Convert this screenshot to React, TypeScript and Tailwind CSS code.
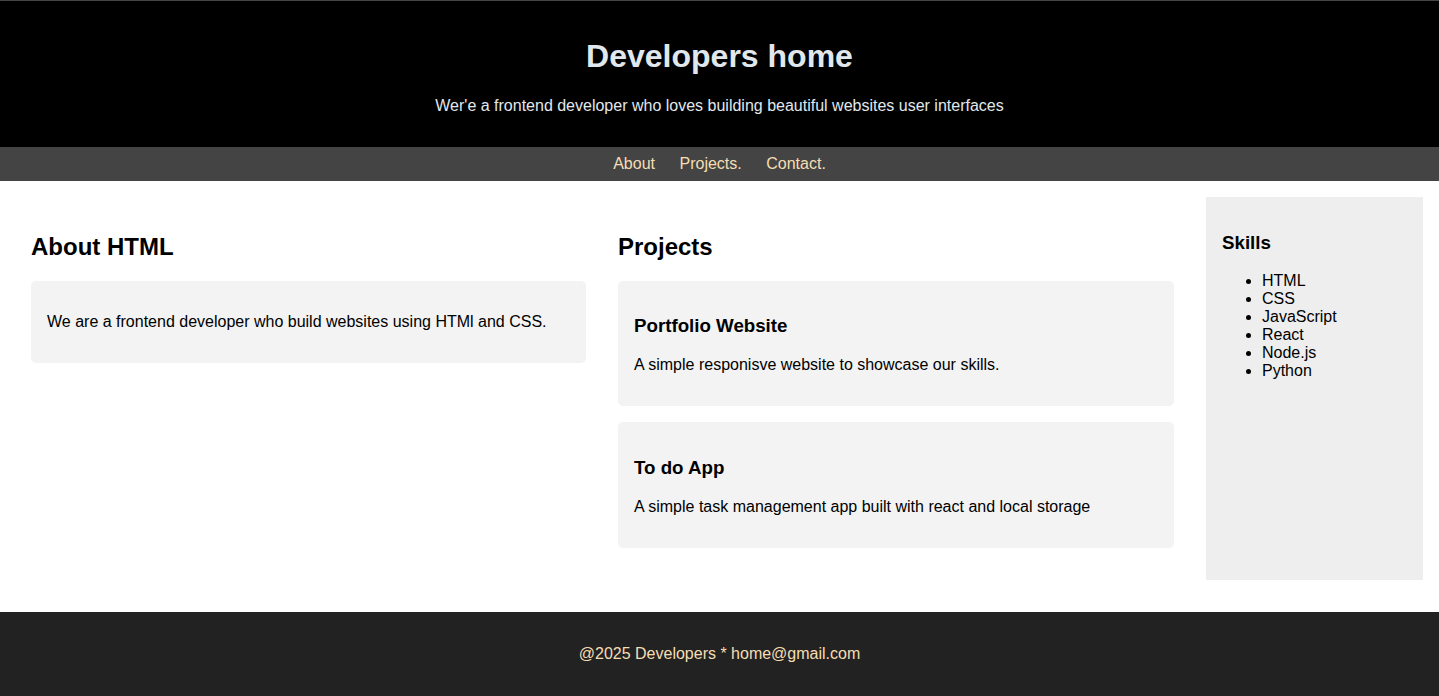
import React from "react";

const font = { fontFamily: '"Liberation Sans", Arial, sans-serif' };

function Card({ title, text }: { title?: string; text: string }) {
  return (
    <div className="mb-4 rounded-[5px] bg-[#f3f3f3] p-4">
      {title && (
        <h3 className="my-[18.72px] text-[18.72px] font-bold leading-[normal] text-black">{title}</h3>
      )}
      <p className="my-4 text-base leading-[normal] text-black">{text}</p>
    </div>
  );
}

export default function App() {
  return (
    <div className="min-h-[696px] bg-white" style={font}>
      <header className="border-t border-[#444444] bg-black px-4 py-4 text-center">
        <h1 className="my-[21.44px] text-[32px] font-bold leading-[normal] text-[#e1e8ed]">
          Developers home
        </h1>
        <p className="my-4 text-base leading-[normal] text-[#e1e8ed]">
          Wer&apos;e a frontend developer who loves building beautiful websites user interfaces
        </p>
      </header>
      <nav className="flex justify-center gap-[24.5px] bg-[#444444] py-2 text-base leading-[18px] text-[#f5deb3]">
        <a href="#about">About</a>
        <a href="#projects">Projects.</a>
        <a href="#contact">Contact.</a>
      </nav>
      <main className="flex pb-8 pl-[15px] pr-4 pt-4">
        <section className="w-[587px] shrink-0 p-4" id="about">
          <h2 className="my-[19.92px] text-2xl font-bold leading-[normal] text-black">About HTML</h2>
          <Card text="We are a frontend developer who build websites using HTMl and CSS." />
        </section>
        <section className="w-[588px] shrink-0 p-4" id="projects">
          <h2 className="my-[19.92px] text-2xl font-bold leading-[normal] text-black">Projects</h2>
          <Card title="Portfolio Website" text="A simple responisve website to showcase our skills." />
          <Card title="To do App" text="A simple task management app built with react and local storage" />
        </section>
        <aside className="ml-4 w-[217px] shrink-0 bg-[#eeeeee] p-4">
          <h3 className="my-[18.72px] text-[18.72px] font-bold leading-[normal] text-black">Skills</h3>
          <ul className="my-4 list-disc pl-10 text-base leading-[18px] text-black">
            <li>HTML</li>
            <li>CSS</li>
            <li>JavaScript</li>
            <li>React</li>
            <li>Node.js</li>
            <li>Python</li>
          </ul>
        </aside>
      </main>
      <footer className="bg-[#222222] px-4 py-[17px] text-center" id="contact">
        <p className="my-4 text-base leading-[18px] text-[#f5deb3]">@2025 Developers * home@gmail.com</p>
      </footer>
    </div>
  );
}
